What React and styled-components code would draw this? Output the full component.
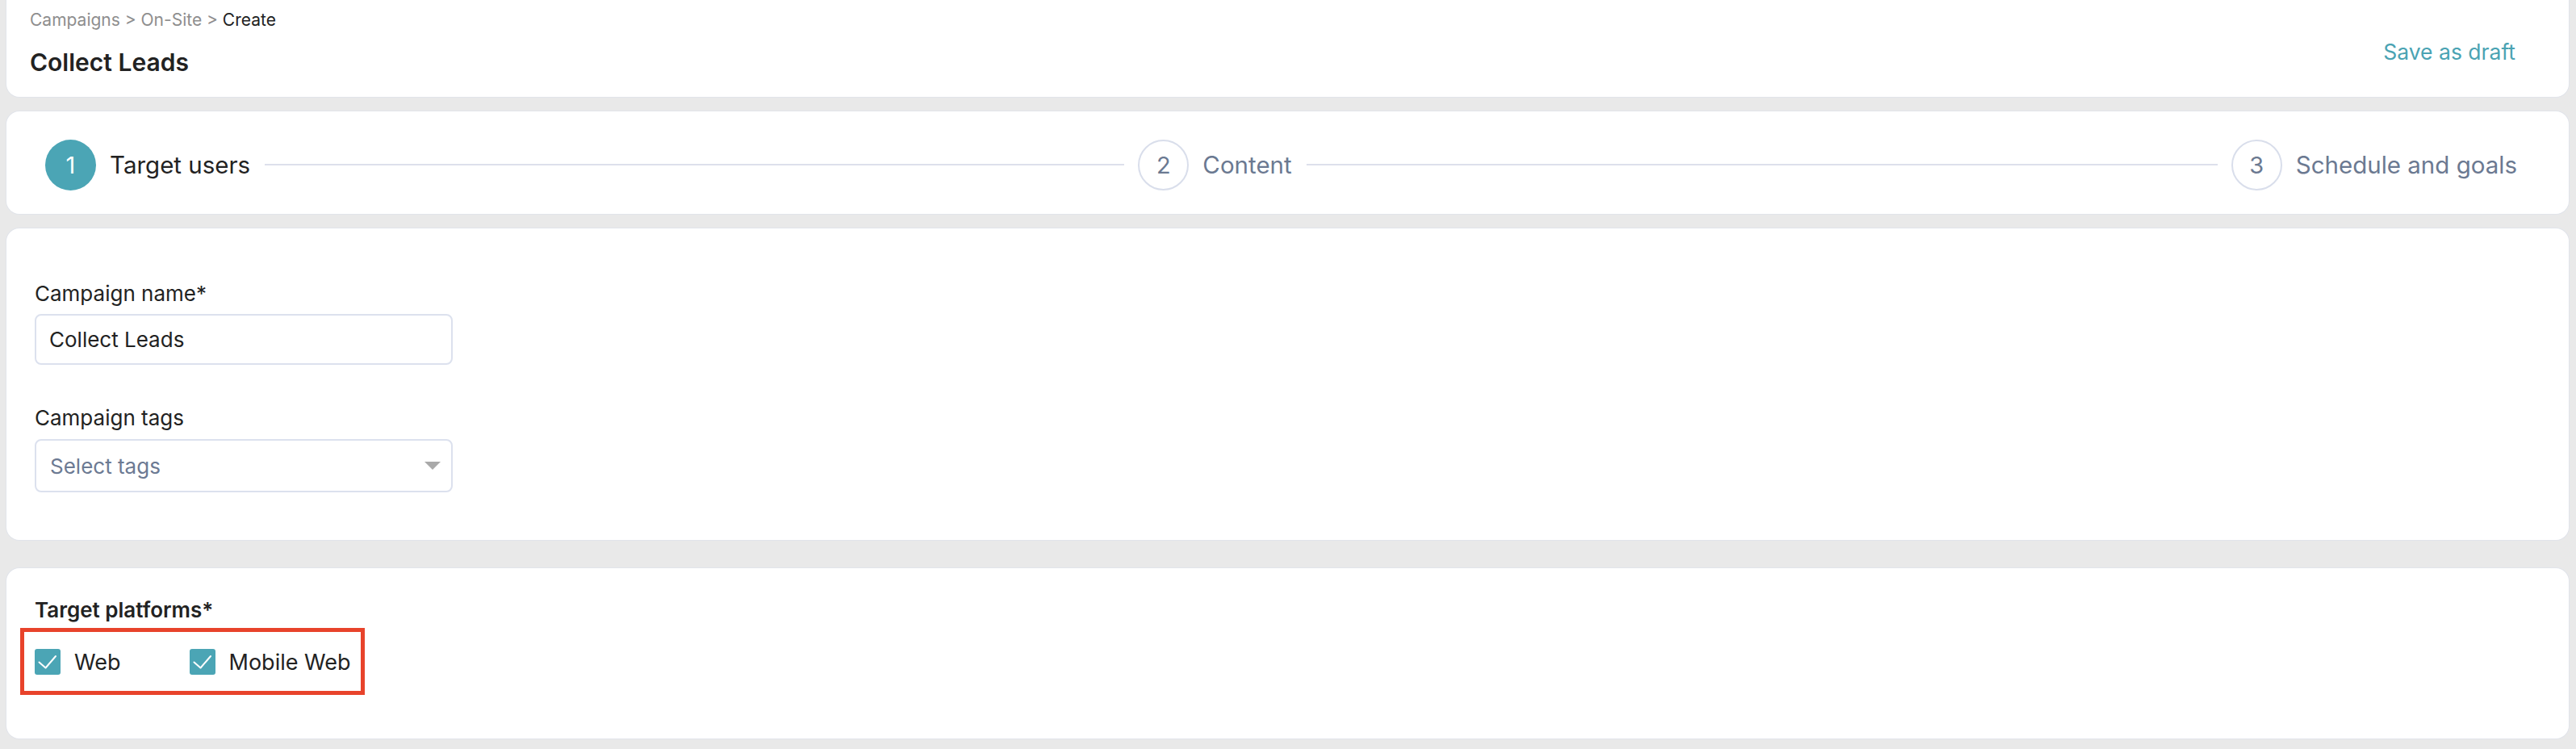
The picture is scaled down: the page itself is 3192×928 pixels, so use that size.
import React from 'react'
import styled, { createGlobalStyle } from 'styled-components'

const GlobalStyle = createGlobalStyle`
  body {
    margin: 0;
    background: #e9e9e9;
    font-family: Inter, "Liberation Sans", sans-serif;
    color: #222;
  }
`

const Page = styled.div`
  display: flex;
  flex-direction: column;
  padding: 0 9px 13px 8px;
`

const Card = styled.div`
  background: #fff;
  border-radius: 16px;
  box-shadow: 0 0 0 1px #e1e4ea;
  margin-top: ${p => p.$gap || 0}px;
`

const HeaderCard = styled(Card)`
  height: 120px;
  box-sizing: border-box;
  border-radius: 0 0 16px 16px;
  display: flex;
  justify-content: space-between;
  padding: 12px 66px 0 29px;
`

const Crumbs = styled.div`
  font-size: 21px;
  line-height: 1.2;
  color: #8e8e8e;
  span { color: #222; }
`

const Title = styled.h1`
  margin: 22px 0 0;
  font-size: 30px;
  font-weight: 600;
  line-height: 1.2;
`

const DraftLink = styled.a`
  align-self: center;
  margin-top: -4px;
  font-size: 26.5px;
  color: #4aa3b3;
  cursor: pointer;
`

const StepperCard = styled(Card)`
  height: 127px;
  box-sizing: border-box;
  display: flex;
  align-items: center;
  padding: 5px 64px 0 48px;
`

const Step = styled.div`
  display: flex;
  align-items: center;
  flex: ${p => (p.$last ? 'none' : 1)};
`

const StepCircle = styled.div`
  width: 63px;
  height: 63px;
  box-sizing: border-box;
  border-radius: 50%;
  display: flex;
  align-items: center;
  justify-content: center;
  font-size: 29px;
  flex: none;
  background: ${p => (p.$active ? '#4ba5b5' : '#fff')};
  color: ${p => (p.$active ? '#fff' : '#6b7991')};
  border: ${p => (p.$active ? 'none' : '2px solid #d9deeb')};
`

const StepLabel = styled.div`
  margin-left: 17px;
  font-size: 29.5px;
  white-space: nowrap;
  color: ${p => (p.$active ? '#222' : '#6b7991')};
`

const StepLine = styled.div`
  flex: 1;
  height: 2px;
  background: #dde0ec;
  margin: 0 17px 0 18px;
`

const FormCard = styled(Card)`
  padding: 65px 0 59px 35px;
`

const Field = styled.div`
  display: flex;
  flex-direction: column;
  & + & { margin-top: 50px; }
`

const Label = styled.label`
  font-size: 26px;
  line-height: 1.2;
  margin-bottom: ${p => p.$mb || 10}px;
`

const Input = styled.input`
  width: 518px;
  height: 63px;
  box-sizing: border-box;
  border: 2px solid #dce1ee;
  border-radius: 8px;
  padding: 0 16px;
  font-family: inherit;
  font-size: 26px;
  color: #222;
  outline: none;
`

const Select = styled.div`
  width: 518px;
  height: 66px;
  box-sizing: border-box;
  border: 2px solid #dce1ee;
  border-radius: 8px;
  padding: 0 13px 0 17px;
  display: flex;
  align-items: center;
  justify-content: space-between;
  font-size: 26px;
  color: #6c7a93;
`

const PlatformCard = styled(Card)`
  padding: 36px 0 78px 35px;
`

const SectionTitle = styled.div`
  font-size: 26px;
  font-weight: 600;
  line-height: 1.2;
  margin-bottom: 32px;
`

const Options = styled.div`
  position: relative;
  display: flex;
  align-items: center;
  gap: 85px;
  width: fit-content;
  &::after {
    content: '';
    position: absolute;
    top: -26px;
    bottom: -24px;
    left: -18px;
    right: -17px;
    border: 5px solid #e8432b;
    pointer-events: none;
  }
`

const Option = styled.label`
  display: flex;
  align-items: center;
  gap: 17px;
  font-size: 27px;
`

const Box = styled.span`
  width: 32px;
  height: 32px;
  border-radius: 3px;
  background: #4ba5b5;
  display: flex;
`

const Check = () => (
  <Box>
    <svg width="32" height="32" viewBox="0 0 32 32">
      <polyline points="5.5,16.5 13.5,23.5 26,9" fill="none" stroke="#fff" strokeWidth="2" strokeLinecap="round" strokeLinejoin="round" />
    </svg>
  </Box>
)

const steps = ['Target users', 'Content', 'Schedule and goals']

export default function App() {
  return (
    <>
      <GlobalStyle />
      <Page>
        <HeaderCard>
          <div>
            <Crumbs>Campaigns &gt; On-Site &gt; <span>Create</span></Crumbs>
            <Title>Collect Leads</Title>
          </div>
          <DraftLink>Save as draft</DraftLink>
        </HeaderCard>

        <StepperCard $gap={18}>
          {steps.map((s, i) => {
            const last = i === steps.length - 1
            return (
              <Step key={s} $last={last}>
                <StepCircle $active={i === 0}>{i + 1}</StepCircle>
                <StepLabel $active={i === 0}>{s}</StepLabel>
                {!last && <StepLine />}
              </Step>
            )
          })}
        </StepperCard>

        <FormCard $gap={18}>
          <Field>
            <Label>Campaign name*</Label>
            <Input defaultValue="Collect Leads" />
          </Field>
          <Field>
            <Label $mb={11}>Campaign tags</Label>
            <Select>
              Select tags
              <svg width="20" height="10" viewBox="0 0 20 10">
                <polygon points="0,0 20,0 10,10" fill="#a9a9a9" />
              </svg>
            </Select>
          </Field>
        </FormCard>

        <PlatformCard $gap={35}>
          <SectionTitle>Target platforms*</SectionTitle>
          <Options>
            <Option><Check />Web</Option>
            <Option><Check />Mobile Web</Option>
          </Options>
        </PlatformCard>
      </Page>
    </>
  )
}
